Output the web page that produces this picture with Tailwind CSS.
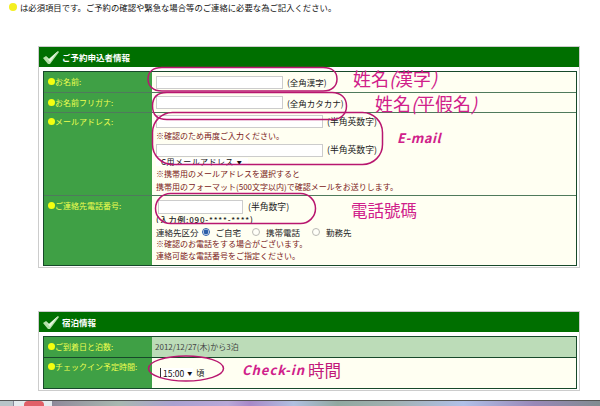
<!DOCTYPE html>
<html lang="ja">
<head>
    <meta charset="UTF-8">
    <title>ご予約申込者情報</title>
    <script src="https://cdn.jsdelivr.net/npm/@tailwindcss/browser@4"></script>
</head>
<body class="relative w-[600px] h-[406px] overflow-hidden bg-white text-[8px] leading-[12px] text-[#222] font-['Noto_Sans_CJK_JP','Liberation_Sans',sans-serif]">

    <!-- note -->
    <p class="flex items-center h-[13px] pl-[9px] text-[8.35px] text-[#111]">
        <span class="w-[8px] h-[8px] mr-[3px] rounded-full bg-[#f4ef20]"></span>は必須項目です。ご予約の確認や緊急な場合等のご連絡に必要な為ご記入ください。
    </p>

    <!-- applicant -->
    <section class="mt-[33px] ml-[38px] w-[542px] h-[222px] border border-[#ccc] bg-white">
        <h2 class="flex items-center h-[20px] pl-[3px] bg-[#006f00] text-white font-bold text-[8.5px]">
            <svg class="w-[18px] h-[15px] mr-[2px]" viewBox="0 0 18 15"><path d="M1 8l3-2 3 3L16 1l1 1-9 12H6z" fill="#b4e0a8"/><path d="M4 6l3 3L16 1l-8 11z" fill="#e6f6e0"/></svg>
            ご予約申込者情報
        </h2>
        <div class="mt-[4px] ml-[4px] w-[534px] border border-[#17492a] bg-[#fffff2]">
            <div class="flex h-[21px] border-b border-[#4f7a5c]">
                <div class="flex items-start pt-[4px] pl-[4px] w-[108px] bg-[#3fa045] text-[#eeff50]"><span class="w-[7px] h-[7px] mt-[2px] rounded-full bg-[#f4ff10]"></span>お名前:</div>
                <div class="flex items-center gap-[4px] pl-[4px]">
                    <input class="w-[127px] h-[13px] border border-[#ccc] bg-white">
                    <span class="text-[8.5px]">(全角漢字)</span>
                </div>
            </div>
            <div class="flex h-[20px] border-b border-[#4f7a5c]">
                <div class="flex items-start pt-[4px] pl-[4px] w-[108px] bg-[#3fa045] text-[#eeff50]"><span class="w-[7px] h-[7px] mt-[2px] rounded-full bg-[#f4ff10]"></span>お名前フリガナ:</div>
                <div class="flex items-center gap-[4px] pl-[4px]">
                    <input class="w-[127px] h-[13px] border border-[#ccc] bg-white">
                    <span class="text-[8.5px]">(全角カタカナ)</span>
                </div>
            </div>
            <div class="flex h-[83px] border-b border-[#4f7a5c]">
                <div class="flex items-start pt-[3px] pl-[4px] w-[108px] bg-[#3fa045] text-[#eeff50]"><span class="w-[7px] h-[7px] mt-[2px] rounded-full bg-[#f4ff10]"></span>メールアドレス:</div>
                <div class="pl-[4px]">
                    <div class="flex items-end gap-[4px] h-[16px] pb-[1px]">
                        <input class="w-[167px] h-[13px] border border-[#ccc] bg-white">
                        <span class="text-[8.8px]">(半角英数字)</span>
                    </div>
                    <p class="mt-[1px] h-[12px] text-[#7a2020]">※確認のため再度ご入力ください。</p>
                    <div class="flex items-center gap-[4px] h-[16px]">
                        <input class="w-[167px] h-[13px] border border-[#ccc] bg-white">
                        <span class="text-[8.8px]">(半角英数字)</span>
                    </div>
                    <div class="flex items-center pl-[5px] w-[92px] h-[8px] overflow-hidden bg-white text-[#111] tracking-[0.4px] whitespace-nowrap">C用メールアドレス<span class="ml-[3px] text-[5px]">▼</span></div>
                    <p class="mt-[2px] h-[13px] text-[#7a2020]">※携帯用のメールアドレスを選択すると</p>
                    <p class="text-[#7a2020] whitespace-nowrap">携帯用のフォーマット(500文字以内)で確認メールをお送りします。</p>
                </div>
            </div>
            <div class="flex h-[69px]">
                <div class="flex items-start pt-[4px] pl-[4px] w-[108px] bg-[#3fa045] text-[#eeff50]"><span class="w-[7px] h-[7px] mt-[2px] rounded-full bg-[#f4ff10]"></span>ご連絡先電話番号:</div>
                <div class="pl-[4px]">
                    <div class="flex items-center gap-[5px] pt-[3px] h-[18px]">
                        <input class="ml-[2px] w-[85px] h-[14px] border border-[#ccc] bg-white">
                        <span class="text-[8.8px]">(半角数字)</span>
                    </div>
                    <div class="h-[9px] overflow-hidden tracking-[0.8px] font-medium whitespace-nowrap">(入力例:090-****-****)</div>
                    <div class="flex items-center mt-[2px] h-[13px] text-[8.5px]">
                        連絡先区分
                        <input type="radio" checked name="tel" class="ml-[3px] mr-[6px] w-[8px] h-[8px] accent-[#2b5ea8]">ご自宅
                        <input type="radio" name="tel" class="ml-[11px] mr-[6px] w-[8px] h-[8px] opacity-50">携帯電話
                        <input type="radio" name="tel" class="ml-[12px] mr-[6px] w-[8px] h-[8px] opacity-50">勤務先
                    </div>
                    <p class="text-[#7a2020]">※確認のお電話をする場合がございます。</p>
                    <p class="text-[#7a2020]">連絡可能な電話番号をご指定ください。</p>
                </div>
            </div>
        </div>
    </section>

    <!-- stay -->
    <section class="mt-[43px] ml-[38px] w-[542px] h-[80px] border border-[#ccc] bg-white">
        <h2 class="flex items-center h-[20px] pl-[3px] bg-[#006f00] text-white font-bold text-[8.5px]">
            <svg class="w-[18px] h-[15px] mr-[2px]" viewBox="0 0 18 15"><path d="M1 8l3-2 3 3L16 1l1 1-9 12H6z" fill="#b4e0a8"/><path d="M4 6l3 3L16 1l-8 11z" fill="#e6f6e0"/></svg>
            宿泊情報
        </h2>
        <div class="mt-[4px] ml-[4px] w-[534px] border border-[#17492a] bg-[#fffff2]">
            <div class="flex h-[21px] border-b border-[#17492a]">
                <div class="flex items-start pt-[4px] pl-[4px] w-[108px] bg-[#3fa045] text-[#eeff50]"><span class="w-[7px] h-[7px] mt-[2px] rounded-full bg-[#f4ff10]"></span>ご到着日と泊数:</div>
                <div class="flex flex-1 items-center pl-[3px] bg-[#bcdcb8] text-[#444]">2012/12/27(木)から3泊</div>
            </div>
            <div class="flex h-[30px]">
                <div class="flex items-start pt-[3px] pl-[4px] w-[108px] bg-[#3fa045] text-[#eeff50]"><span class="w-[7px] h-[7px] mt-[2px] rounded-full bg-[#f4ff10]"></span>チェックイン予定時間:</div>
                <div class="flex items-center pb-[1px] pl-[8px] text-[#111]">
                    <span class="flex items-center gap-[3px] pl-[2px] pr-[1px] h-[10px] bg-white border-l border-[#333] text-[8.5px]">15:00<span class="text-[5px]">▼</span></span>
                    <span class="ml-[3px]">頃</span>
                </div>
            </div>
        </div>
    </section>

    <!-- taskbar strip -->
    <div class="absolute left-0 bottom-0 flex w-[600px] h-[6px] border-t border-[#555]">
        <div class="w-[13px] bg-[#b8c4c8]"></div>
        <div class="flex justify-center pl-[2px] w-[40px] bg-[#e4ebee] border-x border-[#889]">
            <div class="w-[20px] h-[5px] rounded-t-[4px] bg-[#e06068]"></div>
        </div>
        <div class="flex-1 bg-[linear-gradient(90deg,#8f8a9a_0%,#a8b8b0_12%,#a9a0d0_22%,#b8a8d8_32%,#a888c8_36%,#b0c0e0_44%,#90a8a0_52%,#a0b0b0_62%,#b0c0e8_75%,#9888b8_88%,#808c90_100%)]"></div>
    </div>

    <!-- hand drawn notes on top of the form -->
    <svg class="absolute left-0 top-0 pointer-events-none" width="600" height="406" fill="none" stroke="#b8176f" stroke-width="1.5">
        <path d="M162 67.5H323C332 67.5 337 72 337 79S332 91 323 91H162C153 91 148 86 148 79S153 67.5 162 67.5Z"/>
        <path d="M167 92.5H332C341 92.5 346.500 98 346.500 106S341 119.500 332 119.500H167C157 119.500 152.500 114 152.500 106S157 92.500 167 92.500Z"/>
        <rect x="152.5" y="112.5" width="230" height="52" rx="20"/>
        <rect x="155.5" y="193.5" width="160" height="30" rx="15"/>
        <ellipse cx="186" cy="368.500" rx="37.500" ry="12.500"/>
    </svg>
    <span class="absolute left-[353px] top-[67px] text-[18px] leading-[22px] text-[#d0208a]">姓名<i>(</i>漢字<i>)</i></span>
    <span class="absolute left-[375px] top-[92px] text-[18px] leading-[22px] text-[#d0208a]">姓名<i>(</i>平假名<i>)</i></span>
    <span class="absolute left-[397px] top-[130px] text-[13px] leading-[16px] font-bold italic tracking-[0.5px] text-[#d0208a]">E-mail</span>
    <span class="absolute left-[351px] top-[199px] text-[16.5px] leading-[22px] text-[#d0208a]">電話號碼</span>
    <span class="absolute left-[242px] top-[361px] text-[13px] leading-[18px] font-bold italic tracking-[1px] text-[#d0208a]">Check-in</span>
    <span class="absolute left-[308px] top-[361px] text-[16.5px] leading-[18px] text-[#c2187a]">時間</span>
</body>
</html>
